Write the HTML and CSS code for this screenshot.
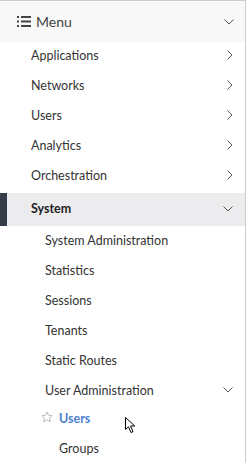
FILE: index.html
```html
<!DOCTYPE html>
<html lang="en">
<head>
  <meta charset="UTF-8" />
  <meta name="viewport" content="width=device-width, initial-scale=1.0"/>
  <title>Menu</title>
  <link rel="stylesheet" href="styles.css">
</head>
<body>
  <nav class="sidenav">
    <div class="menu-head">
      <svg class="list-icon" width="14" height="11" viewBox="0 0 14 11">
        <rect x="0" y="0" width="2" height="2" fill="#444"/>
        <rect x="4" y="0" width="10" height="2" fill="#444"/>
        <rect x="0" y="4.5" width="2" height="2" fill="#444"/>
        <rect x="4" y="4.5" width="10" height="2" fill="#444"/>
        <rect x="0" y="9" width="2" height="2" fill="#444"/>
        <rect x="4" y="9" width="10" height="2" fill="#444"/>
      </svg>
      <span class="menu-title">Menu</span>
      <svg class="chev" width="10" height="6" viewBox="0 0 10 6"><path d="M0.5 0.5 L5 5 L9.5 0.5" fill="none" stroke="#555" stroke-width="1"/></svg>
    </div>

    <ul class="nav-list">
      <li class="nav-item"><span>Applications</span><svg class="chev" width="6" height="10" viewBox="0 0 6 10"><path d="M0.5 0.5 L5 5 L0.5 9.5" fill="none" stroke="#555" stroke-width="1"/></svg></li>
      <li class="nav-item"><span>Networks</span><svg class="chev" width="6" height="10" viewBox="0 0 6 10"><path d="M0.5 0.5 L5 5 L0.5 9.5" fill="none" stroke="#555" stroke-width="1"/></svg></li>
      <li class="nav-item"><span>Users</span><svg class="chev" width="6" height="10" viewBox="0 0 6 10"><path d="M0.5 0.5 L5 5 L0.5 9.5" fill="none" stroke="#555" stroke-width="1"/></svg></li>
      <li class="nav-item"><span>Analytics</span><svg class="chev" width="6" height="10" viewBox="0 0 6 10"><path d="M0.5 0.5 L5 5 L0.5 9.5" fill="none" stroke="#555" stroke-width="1"/></svg></li>
      <li class="nav-item"><span>Orchestration</span><svg class="chev" width="6" height="10" viewBox="0 0 6 10"><path d="M0.5 0.5 L5 5 L0.5 9.5" fill="none" stroke="#555" stroke-width="1"/></svg></li>
      <li class="nav-item active"><span>System</span><svg class="chev" width="10" height="6" viewBox="0 0 10 6"><path d="M0.5 0.5 L5 5 L9.5 0.5" fill="none" stroke="#555" stroke-width="1"/></svg></li>
    </ul>

    <ul class="sub-list">
      <li class="sub-item">System Administration</li>
      <li class="sub-item">Statistics</li>
      <li class="sub-item">Sessions</li>
      <li class="sub-item">Tenants</li>
      <li class="sub-item">Static Routes</li>
      <li class="sub-item open"><span>User Administration</span><svg class="chev" width="10" height="6" viewBox="0 0 10 6"><path d="M0.5 0.5 L5 5 L9.5 0.5" fill="none" stroke="#555" stroke-width="1"/></svg></li>
      <li class="leaf current">
        <svg class="star" width="12" height="12" viewBox="0 0 12 12"><path d="M6 0.8 L7.5 4.3 L11.2 4.6 L8.4 7 L9.2 10.8 L6 8.8 L2.8 10.8 L3.6 7 L0.8 4.6 L4.5 4.3 Z" fill="none" stroke="#bbb" stroke-width="1"/></svg>
        <span>Users</span>
        <svg class="cursor" width="13" height="17" viewBox="0 0 13 17"><path d="M0.5 0.5 L0.5 12.5 L3.5 9.8 L6 15.5 L8 14.6 L5.6 9 L9.8 9 Z" fill="#fff" stroke="#000" stroke-width="1" stroke-linejoin="round"/></svg>
      </li>
      <li class="leaf">Groups</li>
    </ul>
  </nav>
</body>
</html>
```

FILE: styles.css
```css
* { box-sizing: border-box; margin: 0; padding: 0; }
body { font-family: Lato, "Open Sans", sans-serif; font-size: 12.5px; color: #333; background: #fff; }
ul { list-style: none; }
.sidenav { width: 246px; height: 463px; border-top: 1px solid #ccc; border-right: 1px solid #ccc; }
.menu-head { height: 41px; background: #f8f8f8; display: flex; align-items: center; padding: 0 11px 0 17px; }
.list-icon { margin-right: 5px; }
.menu-title { font-size: 14px; color: #444; flex-grow: 1; }
.nav-item { height: 30px; display: flex; align-items: center; padding: 0 12px 2px 31px; }
.nav-item span { flex-grow: 1; }
.nav-item:first-child { margin-top: -1px; }
.nav-item.active { height: 33px; margin-top: 2px; background: #ececee; border-left: 7px solid #363c48; padding-left: 24px; font-weight: bold; color: #222; }
.sub-item { height: 30px; display: flex; align-items: center; padding: 0 12px 2px 45px; }
.sub-item span { flex-grow: 1; }
.leaf { height: 30px; display: flex; align-items: center; padding: 0 0 2px 59px; position: relative; }
.leaf.current { height: 28px; padding-bottom: 4px; color: #4a80d0; font-weight: bold; }
.star { position: absolute; left: 41px; top: 5px; }
.cursor { position: absolute; left: 125px; top: 11px; }
```
